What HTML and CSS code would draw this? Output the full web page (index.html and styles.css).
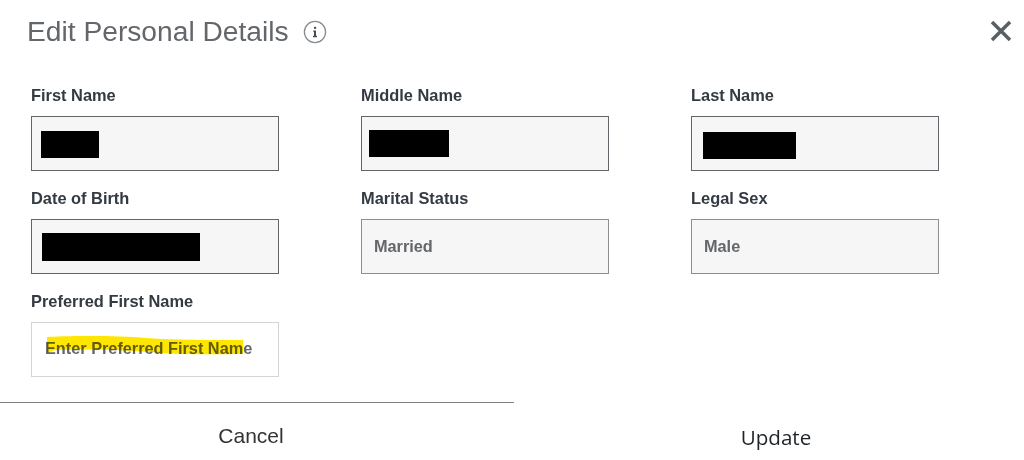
FILE: index.html
```html
<!DOCTYPE html>
<html lang="en">
<head>
    <meta charset="UTF-8">
    <meta name="viewport" content="width=device-width, initial-scale=1.0">
    <title>Edit Personal Details</title>
    <link rel="stylesheet" href="styles.css">
</head>
<body>
    <div class="modal">
        <div class="modal-header">
            <h1>Edit Personal Details</h1>
            <svg class="info-icon" width="24" height="24" viewBox="0 0 24 24" aria-hidden="true">
                <circle cx="12" cy="12" r="10.6" fill="none" stroke="#8a8d90" stroke-width="1.3"/>
                <path d="M10.2 10.4 H13 V15.8 H14 V17.2 H10 V15.8 H11 V11.8 H10.2 Z" fill="#4a4f55"/>
                <rect x="11" y="6.8" width="2.1" height="2.1" fill="#4a4f55"/>
            </svg>
            <svg class="close-icon" width="22" height="22" viewBox="0 0 22 22" aria-hidden="true">
                <path d="M2 2 L20 20 M20 2 L2 20" stroke="#5a5f63" stroke-width="3.5" fill="none"/>
            </svg>
        </div>

        <div class="form-grid">
            <div class="field">
                <label>First Name</label>
                <div class="input readonly"><span class="redact redact-first"></span></div>
            </div>
            <div class="field">
                <label>Middle Name</label>
                <div class="input readonly"><span class="redact redact-middle"></span></div>
            </div>
            <div class="field">
                <label>Last Name</label>
                <div class="input readonly"><span class="redact redact-last"></span></div>
            </div>
            <div class="field">
                <label>Date of Birth</label>
                <div class="input readonly"><span class="redact redact-dob"></span></div>
            </div>
            <div class="field">
                <label>Marital Status</label>
                <div class="input readonly muted">Married</div>
            </div>
            <div class="field">
                <label>Legal Sex</label>
                <div class="input readonly muted">Male</div>
            </div>
            <div class="field">
                <label>Preferred First Name</label>
                <div class="input editable">
                    <svg class="highlight" width="198" height="22" viewBox="0 0 198 22" aria-hidden="true">
                        <path d="M1 2 C15 1 70 0 100 3 C130 5 165 5 197 5 L197 19 C160 19.5 125 19.5 105 17 C70 14 30 14 10 15 L1 18 Z" fill="#ffe600"/>
                    </svg>
                    <span class="placeholder">Enter Preferred First Name</span>
                </div>
            </div>
        </div>

        <div class="modal-footer">
            <div class="footer-left"><button class="btn-cancel">Cancel</button></div>
            <div class="footer-right"><button class="btn-update">Update</button></div>
        </div>
    </div>
</body>
</html>
```

FILE: styles.css
```css
* {
    box-sizing: border-box;
}
body {
    margin: 0;
    background-color: #fff;
    font-family: "Liberation Sans", Arial, sans-serif;
    overflow: hidden;
}
.modal {
    width: 1024px;
    height: 460px;
}
.modal-header {
    display: flex;
    align-items: center;
    height: 62px;
    padding-left: 27px;
    padding-right: 12px;
}
.modal-header h1 {
    margin: 0;
    font-size: 28.2px;
    font-weight: normal;
    color: #63666a;
}
.info-icon {
    margin-left: 14px;
    margin-top: 2px;
}
.close-icon {
    margin-left: auto;
    margin-top: -1px;
}
.form-grid {
    display: grid;
    grid-template-columns: repeat(3, 248px);
    column-gap: 82px;
    row-gap: 18px;
    padding-left: 31px;
    padding-top: 24px;
}
.field label {
    display: block;
    height: 30px;
    font-size: 16.4px;
    font-weight: bold;
    line-height: 18px;
    color: #333a42;
}
.input {
    position: relative;
    display: flex;
    align-items: center;
    height: 55px;
    padding-left: 12px;
    padding-bottom: 2px;
    font-size: 16.3px;
    font-weight: bold;
}
.readonly {
    background-color: #f6f6f6;
    border: 1px solid #626569;
}
.muted {
    padding-bottom: 0;
    border-color: #8b8d90;
    color: #63666a;
}
.editable {
    padding-left: 13px;
    border: 1px solid #d4d4d4;
    color: #63666a;
}
.redact {
    display: block;
    height: 27px;
    background-color: #000;
}
.redact-first {
    width: 58px;
    margin-left: -3px;
    margin-top: 4px;
}
.redact-middle {
    width: 80px;
    margin-left: -5px;
    margin-top: 2px;
}
.redact-last {
    width: 93px;
    margin-left: -1px;
    margin-top: 5px;
}
.redact-dob {
    width: 158px;
    margin-left: -2px;
    height: 28px;
    margin-top: 3px;
}
/* marker scribble sits over the placeholder text */
.highlight {
    position: absolute;
    left: 14px;
    top: 12px;
}
.placeholder {
    position: relative;
    mix-blend-mode: multiply;
}
.modal-footer {
    display: flex;
    margin-top: 25px;
}
.footer-left {
    width: 514px;
    border-top: 1px solid #808080;
    padding-right: 12px;
    text-align: center;
}
.footer-right {
    flex: 1;
    padding-left: 14px;
    padding-top: 1px;
    text-align: center;
}
button {
    padding: 0;
    border: none;
    background: none;
    cursor: pointer;
    color: #222;
}
.btn-cancel {
    margin-top: 21px;
    font-family: "Liberation Sans", Arial, sans-serif;
    font-size: 21px;
    color: #333;
}
.btn-update {
    margin-top: 20px;
    font-family: "Open Sans", sans-serif;
    font-size: 20.6px;
    color: #1f2328;
}
```
